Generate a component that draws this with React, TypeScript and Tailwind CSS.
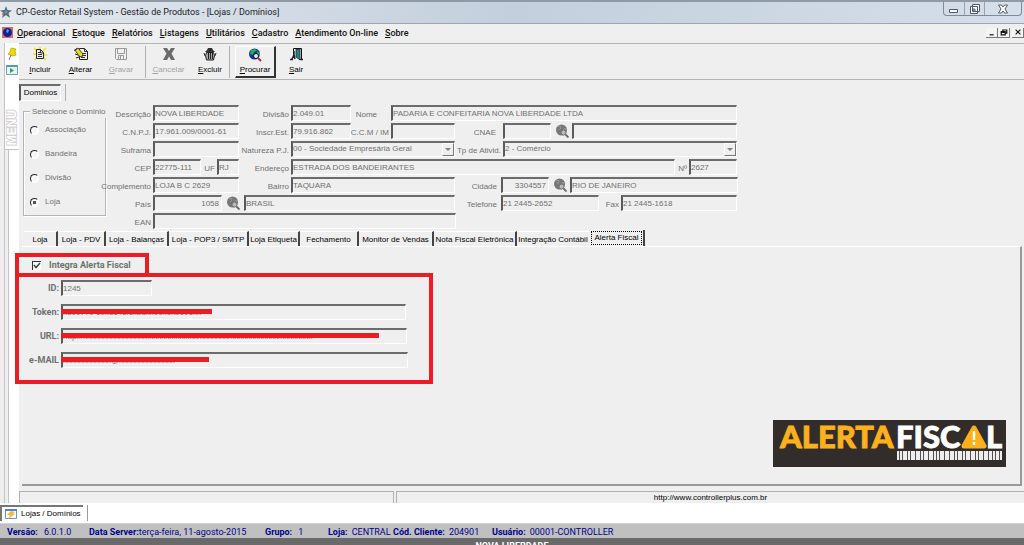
import React from "react";
import clsx from "clsx";

const MENU_ITEMS = [
  "Operacional",
  "Estoque",
  "Relatórios",
  "Listagens",
  "Utilitários",
  "Cadastro",
  "Atendimento On-line",
  "Sobre",
];

const STORE_TABS = [
  { name: "Loja", width: "w-[34px]" },
  { name: "Loja - PDV", width: "w-[48px]" },
  { name: "Loja - Balanças", width: "w-[63px]" },
  { name: "Loja - POP3 / SMTP", width: "w-[80px]" },
  { name: "Loja Etiqueta", width: "w-[51px]" },
  { name: "Fechamento", width: "w-[59px]" },
  { name: "Monitor de Vendas", width: "w-[75px]" },
  { name: "Nota Fiscal Eletrônica", width: "w-[83px]" },
  { name: "Integração Contábil", width: "w-[74px]" },
];

const STATUS_ITEMS = [
  { label: "Versão:", value: "6.0.1.0", width: "w-[82px]", gap: "gap-1.5" },
  { label: "Data Server:", value: "terça-feira, 11-agosto-2015", width: "w-[176px]", gap: "" },
  { label: "Grupo:", value: "1", width: "w-[63px]", gap: "gap-1.5" },
  { label: "Loja:", value: "CENTRAL", width: "w-[65px]", gap: "gap-1" },
  { label: "Cód. Cliente:", value: "204901", width: "w-[99px]", gap: "gap-1" },
  { label: "Usuário:", value: "00001-CONTROLLER", width: "w-[130px]", gap: "gap-1" },
];

const sunken = "border-t-2 border-l-2 border-r border-b border-t-[#6c6c6c] border-l-[#5a5a5a] border-r-white border-b-white";

interface FieldProps {
  id: string;
  label?: string;
  name?: string;
  labelWidth: string;
  width: string;
  value?: string;
  right?: boolean;
}

const Field: React.FC<FieldProps> = ({ id, label, name, labelWidth, width, value = "", right }) => (
  <>
    <label
      htmlFor={id}
      className={clsx("flex shrink-0 justify-end self-end pr-[2px] leading-[13px] whitespace-nowrap", labelWidth)}
    >
      {label}
    </label>
    <input
      id={id}
      aria-label={name ?? label}
      readOnly
      defaultValue={value}
      className={clsx("h-4 shrink-0 bg-transparent outline-none", sunken, width, right && "pr-[2px] text-right")}
    />
  </>
);

const SelectField: React.FC<FieldProps> = ({ id, label, labelWidth, width, value }) => (
  <>
    <label
      htmlFor={id}
      className={clsx("flex shrink-0 justify-end self-end pr-[2px] leading-[13px] whitespace-nowrap", labelWidth)}
    >
      {label}
    </label>
    <div className={clsx("relative h-4 shrink-0", width)}>
      <select id={id} className={clsx("h-full w-full appearance-none bg-transparent pb-[2px] outline-none", sunken)}>
        <option>{value}</option>
      </select>
      <span className="pointer-events-none absolute top-[2px] right-px flex h-[13px] w-3 items-center justify-center border border-t-white border-r-[#777] border-b-[#777] border-l-white bg-[#efefef]">
        <svg viewBox="0 0 6 3" className="h-[3px] w-1.5" fill="#808080">
          <path d="M0 0h6L3 3z" />
        </svg>
      </span>
    </div>
  </>
);

const SearchButton: React.FC<{ name: string }> = ({ name }) => (
  <button aria-label={name} className="ml-[3px] flex size-4 shrink-0 items-center justify-center">
    <svg viewBox="0 0 14 14" className="size-3.5">
      <circle cx="6.5" cy="6" r="5.5" fill="#777" />
      <path d="M3 3l2-1 1 2-2 2M8 6l2-2 1 2" stroke="#999" fill="none" />
      <circle cx="8.5" cy="8.5" r="2.5" fill="#bbb" stroke="#707070" />
      <path d="M10.5 10.5l3 3" stroke="#666" strokeWidth="1.8" />
    </svg>
  </button>
);

const NewIcon = () => (
  <svg viewBox="0 0 14 14" className="size-3.5">
    <path d="M1 1l3 3M7 0v3M13 1l-3 3M0 7h3M14 8h-3M1 13l3-2M13 13l-2-2" stroke="#f2e600" strokeWidth="1.5" />
    <path d="M3.500 2.500h4l3 3v6h-7z" fill="#eee" stroke="#222" />
    <path d="M5 5.500h3M5 7.500h4M5 9.500h4M7.500 3v3h3" stroke="#333" fill="none" />
  </svg>
);

const EditIcon = () => (
  <svg viewBox="0 0 14 14" className="size-3.5">
    <path d="M5.500 1.500h5l3 3v8h-8z" fill="#eee" stroke="#222" />
    <path d="M7 6.500h5M7 8.500h5M7 10.500h4M10.500 1.500v3h3" stroke="#333" fill="none" />
    <path d="M1 3l3-2 5 6-1 3-3-1z" fill="#e8dc20" stroke="#222" strokeWidth=".8" />
    <path d="M0 3.500l3-2M1 7l3 1M2 11l3-1" stroke="#222" />
  </svg>
);

const SaveIcon = () => (
  <svg viewBox="0 0 14 14" className="size-3.5" fill="none" stroke="#999">
    <path d="M1.500 1.500h11v11h-10l-1-1z" />
    <path d="M3.500 1.500v5h7v-5M4.500 12.500v-4h5v4M6.500 9v3" />
  </svg>
);

const CancelIcon = () => (
  <svg viewBox="0 0 14 14" className="size-3.5">
    <path d="M1 1h4l2 3 2-3h4L9.500 6.500 13 13H9L7 9.500 5 13H1l3.500-6.500z" fill="#6b6b6b" />
  </svg>
);

const TrashIcon = () => (
  <svg viewBox="0 0 14 14" className="size-3.5">
    <path d="M2 5l2-2 1-2h4l1 2 2 2z" fill="#333" />
    <path d="M3.500 5.500h7l1 3-1 4.500h-7l-1-4.500z" fill="#aaa" stroke="#222" />
    <path d="M5.500 6v6M7.500 6v6M9.500 6v6M6 3h2" stroke="#222" fill="none" />
    <path d="M1 6l1 3M13 6l-1 3" stroke="#333" />
  </svg>
);

const GlobeIcon = () => (
  <svg viewBox="0 0 14 14" className="size-3.5">
    <circle cx="6.500" cy="6" r="5.500" fill="#1230a8" />
    <path d="M3 2l4-1 2 2-3 1-1 3-3-1zM9 3l3 2v3l-3-1z" fill="#24b14a" />
    <circle cx="8" cy="8" r="2.500" fill="#d8f4f8" stroke="#111" />
    <path d="M10 10l3 3" stroke="#c81e5a" strokeWidth="2" />
  </svg>
);

const ExitIcon = () => (
  <svg viewBox="0 0 14 14" className="size-3.5">
    <path d="M4.500 10V1.500h8V12" fill="#efefef" stroke="#111" />
    <path d="M7 2h4v11l-4-3z" fill="#268686" stroke="#111" strokeWidth=".7" />
    <path d="M5 4v4M5 8l-2 4M5 8l1 4M1 12.500h3M11 12.500h3" stroke="#222" strokeWidth="1.5" />
  </svg>
);

interface ToolProps {
  label: string;
  icon: React.ReactNode;
  width?: string;
  disabled?: boolean;
  raised?: boolean;
}

const ToolButton: React.FC<ToolProps> = ({ label, icon, width = "w-10", disabled, raised }) => (
  <button
    disabled={disabled}
    className={clsx(
      "flex h-8 shrink-0 flex-col items-center justify-between pt-px",
      width,
      disabled ? "text-[#a3a3a3]" : "text-black",
      raised ? "border-t border-r-2 border-b-2 border-l border-t-white border-r-[#333] border-b-[#333] border-l-white pb-px" : "pb-[3px]",
    )}
  >
    {icon}
    <span className="leading-[11px] first-letter:underline">{label}</span>
  </button>
);

const ToolSeparator = () => <div className="h-8 w-px shrink-0 bg-[#b0b0b0]" />;

const TitleBar = () => (
  <header className="flex h-6 shrink-0 justify-between border-t-2 border-b border-t-[#8f9aa5] border-b-[#9da5af] bg-linear-to-r from-[#e4e9ef] via-[#c3cfdd] to-[#d5dfea]">
    <div className="flex items-center gap-1 pb-[2px]">
      <svg viewBox="0 0 12 12" className="size-3">
        <path d="M6 0l1.500 4L12 4.500 8.500 7l1.500 5-4-3-4 3 1.500-5L0 4.500 4.500 4z" fill="#5f6a74" />
        <circle cx="6" cy="6" r="1.500" fill="#4f9bd5" />
        <circle cx="3" cy="8" r="1" fill="#d4604e" />
      </svg>
      <h1 className="font-['Roboto',sans-serif] text-[9px] text-[#1b1b1b]">
        CP-Gestor Retail System - Gestão de Produtos - [Lojas / Domínios]
      </h1>
    </div>
    <div className="mr-[2px] flex h-[14px] rounded-b border border-t-0 border-[#7f8b98] text-[#59616b]">
      <button aria-label="Minimizar" className="flex w-[21px] items-center justify-center border-r border-[#98a3af]">
        <svg viewBox="0 0 10 10" className="size-2.5" fill="#fff" stroke="#555b66">
          <path d="M.5 5.500h8v3h-8z" />
        </svg>
      </button>
      <button aria-label="Restaurar" className="flex w-5 items-center justify-center border-r border-[#98a3af]">
        <svg viewBox="0 0 10 10" className="size-2.5" fill="#fff" stroke="#555b66">
          <path d="M2.500.5h7v7h-7zM.5 2.500h7v7h-7zM3 5h2v2H3z" />
        </svg>
      </button>
      <button aria-label="Fechar" className="flex w-9 items-center justify-center">
        <svg viewBox="0 0 10 10" className="size-2.5" fill="#fff" stroke="#555b66">
          <path d="M.5 1h3L5 3l1.500-2h3L7 5l2.500 4h-3L5 7 3.500 9h-3L3 5z" />
        </svg>
      </button>
    </div>
  </header>
);

const MenuBar = () => (
  <nav className="flex h-[19px] shrink-0 items-center justify-between pb-[2px]">
    <div className="flex items-center">
      <svg viewBox="0 0 11 11" className="mr-1 ml-0.5 size-[11px]">
        <path d="M0 0h11v11H0z" fill="#d96a6a" />
        <circle cx="5.500" cy="5.500" r="4.500" fill="#10208c" />
        <path d="M5 2l2 1-1 3-2-1z" fill="#4aa0ff" />
      </svg>
      <div className="flex gap-[7px] font-['Roboto',sans-serif] text-[9px] font-medium text-[#111]">
        {MENU_ITEMS.map((item) => (
          <button key={item}>
            <span className="inline-block first-letter:underline">{item}</span>
          </button>
        ))}
      </div>
    </div>
    <div className="flex text-black">
      {["M2 8.500h5", "M3.500 4V2.500h5v4H7M1.500 4.500h5v4h-5zM1.500 5.500h5", "M2 2l6 6M8 2l-6 6"].map((d, i) => (
        <button
          key={d}
          aria-label={["Minimizar janela", "Restaurar janela", "Fechar janela"][i]}
          className="flex h-2.5 w-3 items-center justify-center border-r border-b border-[#777] bg-[#f4f4f4] last:ml-0.5"
        >
          <svg viewBox="0 0 10 10" className="size-2" fill="none" stroke="#111" strokeWidth="1.500">
            <path d={d} />
          </svg>
        </button>
      ))}
    </div>
  </nav>
);

const SideMenu = () => (
  <aside className="flex w-[19px] shrink-0 flex-col pl-1">
    <div className="flex h-[107px] flex-col items-center gap-1 border-b border-l border-[#c4c4c4] bg-white pt-1">
      <svg viewBox="0 0 12 14" className="h-3.5 w-3">
        <path d="M5 1l5 1-1 2 1 4-3 1-5-2 2-2z" fill="#f3d900" stroke="#b79d00" strokeWidth=".7" />
        <path d="M5 8l-2 5" stroke="#777" />
      </svg>
      <svg viewBox="0 0 12 10" className="h-2.5 w-3">
        <path d="M.5.500h11v9H.500z" fill="#e7f5ef" stroke="#6aa2cf" />
        <path d="M0 1h12" stroke="#5a93cc" strokeWidth="2" />
        <path d="M4 3l4 2.500L4 8z" fill="#36a34c" />
      </svg>
      <span className="mt-auto mb-1 rotate-180 text-[12px] leading-[13px] font-bold text-white [-webkit-text-stroke:2px_#d2d2d2] [paint-order:stroke_fill] [writing-mode:vertical-rl]">
        MENU
      </span>
    </div>
    <div className="flex flex-1 border-l border-[#c4c4c4]">
      <div className="ml-[3px] flex-1 border-l border-[#c4c4c4] bg-white" />
    </div>
  </aside>
);

const Toolbar = () => (
  <div className="flex h-[37px] shrink-0 items-center border-t border-b border-[#b5b5b5] pl-px text-[#111]">
    <ToolButton label="Incluir" icon={<NewIcon />} />
    <ToolButton label="Alterar" icon={<EditIcon />} width="w-[41px]" />
    <ToolButton label="Gravar" icon={<SaveIcon />} disabled />
    <div className="w-1" />
    <ToolSeparator />
    <ToolButton label="Cancelar" icon={<CancelIcon />} width="w-[45px]" disabled />
    <ToolButton label="Excluir" icon={<TrashIcon />} width="w-[38px]" />
    <ToolSeparator />
    <div className="w-[5px]" />
    <ToolButton label="Procurar" icon={<GlobeIcon />} width="w-[41px]" raised />
    <ToolButton label="Sair" icon={<ExitIcon />} />
  </div>
);

const DomainGroup = () => (
  <fieldset className="relative mt-[6px] h-[105px] w-[83px] shrink-0 border border-[#b4b4b4] shadow-[1px_1px_0_#fff,inset_1px_1px_0_#fff]">
    <legend className="absolute -top-[7px] left-1.5 bg-[#efefef] px-0.5 leading-[13px] whitespace-nowrap">
      Selecione o Dominio
    </legend>
    <div className="flex flex-col gap-3 pt-3 pl-1.5">
      {["Associação", "Bandeira", "Divisão", "Loja"].map((option) => (
        <label key={option} className="flex h-3 items-center gap-1.5">
          <input
            type="radio"
            name="dominio"
            defaultChecked={option === "Loja"}
            className="size-[9px] appearance-none rounded-full border border-t-[#222] border-r-white border-b-white border-l-[#222] bg-[#f8f8f8] checked:bg-[radial-gradient(#555_1.5px,transparent_2px)]"
          />
          {option}
        </label>
      ))}
    </div>
  </fieldset>
);

const row = "flex h-4";

const StoreForm = () => (
  <form className="flex pl-1 text-[#707070]">
    <DomainGroup />
    <div className="relative flex flex-col gap-[2px]">
      <div className={row}>
        <Field id="descricao" label="Descrição" labelWidth="w-[47px]" width="w-[86px]" value="NOVA LIBERDADE" />
        <Field id="divisao" label="Divisão" labelWidth="w-[52px]" width="w-[60px]" value="2.049.01" />
        <Field id="nome" label="Nome" labelWidth="w-[28px] mr-[12px]" width="w-[346px]" value="PADARIA E CONFEITARIA NOVA LIBERDADE LTDA" />
      </div>
      <div className={row}>
        <Field id="cnpj" label="C.N.P.J." labelWidth="w-[47px]" width="w-[86px]" value="17.961.009/0001-61" />
        <Field id="inscr" label="Inscr.Est." labelWidth="w-[52px]" width="w-[60px]" value="79.916.862" />
        <Field id="ccm" label="C.C.M / IM" labelWidth="w-[40px]" width="w-[64px]" />
        <Field id="cnae" label="CNAE" labelWidth="w-[43px] mr-[5px]" width="w-[48px]" />
        <SearchButton name="Procurar CNAE" />
        <Field id="cnae-desc" name="Descrição CNAE" labelWidth="w-0" width="w-[165px]" />
      </div>
      <div className={row}>
        <Field id="suframa" label="Suframa" labelWidth="w-[47px]" width="w-[86px]" />
        <SelectField id="natureza" label="Natureza P.J." labelWidth="w-[52px]" width="w-[164px]" value="00 - Sociedade Empresária Geral" />
        <SelectField id="ativid" label="Tp de Ativid." labelWidth="w-[48px]" width="w-[234px]" value="2 - Comércio" />
      </div>
      <div className={row}>
        <Field id="cep" label="CEP" labelWidth="w-[47px]" width="w-[48px]" value="22775-111" />
        <Field id="uf" label="UF" labelWidth="w-[16px]" width="w-[22px]" value="RJ" />
        <Field id="endereco" label="Endereço" labelWidth="w-[52px]" width="w-[384px]" value="ESTRADA DOS BANDEIRANTES" />
        <Field id="numero" label="Nº" labelWidth="w-[14px]" width="w-[48px]" value="2627" />
      </div>
      <div className={row}>
        <Field id="complemento" label="Complemento" labelWidth="w-[47px]" width="w-[86px]" value="LOJA B C 2629" />
        <Field id="bairro" label="Bairro" labelWidth="w-[52px]" width="w-[164px]" value="TAQUARA" />
        <Field id="cidade" label="Cidade" labelWidth="w-[44px] mr-[2px]" width="w-[48px]" value="3304557" right />
        <SearchButton name="Procurar cidade" />
        <Field id="cidade-nome" name="Nome da cidade" labelWidth="w-0" width="w-[168px]" value="RIO DE JANEIRO" />
      </div>
      <div className={row}>
        <Field id="pais" label="País" labelWidth="w-[47px]" width="w-[69px]" value="1058" right />
        <SearchButton name="Procurar país" />
        <Field id="pais-nome" name="Nome do país" labelWidth="w-[3px]" width="w-[211px]" value="BRASIL" />
        <Field id="telefone" label="Telefone" labelWidth="w-[44px] mr-[2px]" width="w-[98px]" value="21 2445-2652" />
        <Field id="fax" label="Fax" labelWidth="w-[22px]" width="w-[116px]" value="21 2445-1618" />
      </div>
      <div className={row}>
        <Field id="ean" label="EAN" labelWidth="w-[47px]" width="w-[303px]" />
      </div>
    </div>
  </form>
);

const AlertLogo = () => (
  <svg viewBox="0 0 233 47" className="h-[47px] w-[233px] overflow-visible" role="img" aria-label="Alerta Fiscal">
    <path d="M0 0h233v47H0z" fill="#322d2a" />
    <g fontFamily="Lato, sans-serif" fontWeight="900" fontSize="31" strokeWidth=".8">
      <text x="7" y="28" fill="#fcb11c" stroke="#fcb11c">
        ALERTA
      </text>
      <text x="123" y="28" fill="#fff" stroke="#fff">
        FISC
      </text>
      <text x="213" y="28" fill="#fff" stroke="#fff">
        L
      </text>
    </g>
    <path d="M201 8l10 18H191z" fill="#fcb11c" stroke="#fcb11c" strokeWidth="5" strokeLinejoin="round" />
    <path d="M201 11v9M201 22v3" stroke="#fff" strokeWidth="2.500" />
    <path d="M124 31h105v9H124z" fill="#eee" />
    <path
      d="M126.500 31v9M129.500 31v9M134.500 31v9M137.500 31v9M142.500 31v9M147.500 31v9M150.500 31v9M155.500 31v9M160.500 31v9M163.500 31v9M166.500 31v9M171.500 31v9M176.500 31v9M181.500 31v9M184.500 31v9M189.500 31v9M192.500 31v9M197.500 31v9M202.500 31v9M205.500 31v9M210.500 31v9M215.500 31v9M219.500 31v9M222.500 31v9M226.500 31v9"
      stroke="#55504d"
    />
  </svg>
);

const ALERT_FIELDS = [
  { id: "id", label: "ID:", value: "1245", width: "w-[91px]", mark: "" },
  { id: "token", label: "Token:", value: "xd00770 10xd14cf1xbdxx00x0xb101xx", width: "w-[345px]", mark: "w-[151px]" },
  { id: "url", label: "URL:", value: "http://xxxxxxxxxxxxxxxx.xxxxxx.xxx.xx/xxxxxxx/xxxxxxxxxxxx/xxxxxxxx", width: "w-[346px]", mark: "w-[318px]" },
  { id: "email", label: "e-MAIL", value: "xxxxxxxxxxxx@xxxxxxxxxxxxxx", width: "w-[347px]", mark: "w-[148px]" },
];

const AlertTab = () => (
  <section className="relative flex flex-1 items-end justify-between border-t border-r-2 border-b-2 border-t-white border-r-[#999] border-b-[#999] text-[#707070]">
    <div className="-ml-[7px] self-start pt-[6px]">
      <label className="flex h-6 w-[134px] items-center gap-2 border-4 border-[#ed1c24] pl-[13px] font-['Roboto',sans-serif] text-[9px] font-bold">
        <span className="relative flex size-[9px]">
          <input
            type="checkbox"
            defaultChecked
            className="peer size-[9px] appearance-none border-t border-l border-[#333] bg-[#fafafa]"
          />
          <svg
            viewBox="0 0 9 9"
            className="pointer-events-none absolute inset-0 hidden size-[9px] peer-checked:block"
            fill="none"
            stroke="#444"
            strokeWidth="1.5"
          >
            <path d="M2 4l2 2.500L8 2" />
          </svg>
        </span>
        Integra Alerta Fiscal
      </label>
      <div className="-mt-1 flex h-[111px] w-[418px] flex-col gap-2 border-4 border-[#ed1c24] pt-[3px]">
        {ALERT_FIELDS.map((field) => (
          <div key={field.id} className="flex h-4 items-center">
            <label htmlFor={field.id} className="w-[42px] pr-[2px] text-right font-['Roboto',sans-serif] text-[9px] font-bold">
              {field.label}
            </label>
            <div className="relative">
              <input
                id={field.id}
                readOnly
                defaultValue={field.value}
                className={clsx("block h-4 bg-transparent pb-px outline-none", sunken, field.width)}
              />
              {field.mark && <span className={clsx("absolute top-[5px] left-0 h-[5px] bg-[#ed1c24]", field.mark)} />}
            </div>
          </div>
        ))}
      </div>
    </div>
    <div className="mr-[14px] mb-[17px]">
      <AlertLogo />
    </div>
  </section>
);

const App: React.FC = () => {
  return (
    <div className="flex h-screen flex-col overflow-hidden bg-[#efefef] font-['Liberation_Sans',sans-serif] text-[8px] leading-3">
      <TitleBar />
      <MenuBar />
      <div className="flex min-h-0 flex-1">
        <SideMenu />
        <main className="flex min-w-0 flex-1 flex-col">
          <Toolbar />
          <div className="flex h-[25px] shrink-0 items-end pb-1">
            <button className={clsx("h-[17px] w-[42px]", sunken)}>Dominios</button>
            <div className="ml-1 h-[17px] w-px bg-[#b0b0b0]" />
          </div>
          <StoreForm />
          <div role="tablist" className="flex h-[17px] shrink-0 items-end pl-[5px] text-black">
            {STORE_TABS.map((tab) => (
              <button
                key={tab.name}
                role="tab"
                className={clsx(
                  "h-[15px] shrink-0 border-t border-r-2 border-t-white border-r-[#444] pt-[2px] whitespace-nowrap nth-9:border-r-transparent",
                  tab.width,
                )}
              >
                {tab.name}
              </button>
            ))}
            <button role="tab" aria-selected className="h-4 w-[54px] border-r-2 border-[#444] pr-px whitespace-nowrap">
              <span className="block h-3.5 border border-dotted border-black">Alerta Fiscal</span>
            </button>
          </div>
          <div className="flex flex-1 flex-col pr-[2px] pb-[5px] pl-[3px]">
            <AlertTab />
          </div>
          <div className="flex h-3 shrink-0 gap-[2px]">
            <div className="w-[375px] shrink-0 border-t border-r border-l border-[#b0b0b0]" />
            <div className="flex flex-1 justify-center border-t border-l border-[#b0b0b0] text-black">
              <a href="http://www.controllerplus.com.br">http://www.controllerplus.com.br</a>
            </div>
          </div>
        </main>
      </div>
      <div className="flex h-5 shrink-0 items-center bg-white">
        <button className="flex h-4 w-[83px] items-center gap-1 border-t-2 border-l-2 border-[#777] pl-[3px] whitespace-nowrap">
          <svg viewBox="0 0 12 12" className="size-3 shrink-0">
            <path d="M.5 1.500h11v9H.500z" fill="#fff" stroke="#5c97dc" />
            <path d="M0 2h12" stroke="#4787d8" strokeWidth="2" />
            <path d="M6 3l4 1-2 2h2l-7 5 2-4H2z" fill="#f7b730" />
          </svg>
          Lojas / Domínios
        </button>
        <div className="ml-1 h-4 w-px bg-[#999]" />
      </div>
      <footer className="shrink-0">
        <div className="flex h-[15px] items-center border-t border-[#d0d0d0] bg-[#c0c0c0] pt-px pl-[7px] font-['Roboto',sans-serif] text-[9px] text-[#00008b]">
          {STATUS_ITEMS.map((item) => (
            <div key={item.label} className={clsx("flex whitespace-nowrap", item.width, item.gap)}>
              <b>{item.label}</b>
              <span>{item.value}</span>
            </div>
          ))}
        </div>
        <div className="h-[7px] overflow-hidden bg-[#6a6a6a] pt-[3px] text-center font-['Roboto',sans-serif] text-[9px] leading-[10px] font-bold text-white">
          NOVA LIBERDADE
        </div>
      </footer>
    </div>
  );
};

export default App;
